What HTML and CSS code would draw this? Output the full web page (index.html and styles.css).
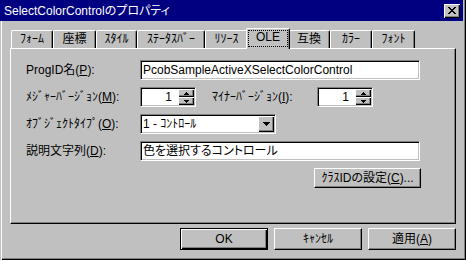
FILE: index.html
```html
<!DOCTYPE html>
<html lang="ja">
<head>
    <meta charset="UTF-8">
    <title>SelectColorControlのプロパティ</title>
    <link rel="stylesheet" href="styles.css">
</head>
<body>

<div class="window">
    <div class="titlebar">
        <span class="title">SelectColorControlのプロパティ</span>
        <span class="close">
            <svg width="8" height="7" viewBox="0 0 8 7"><path d="M0 0h2v1h-2z M6 0h2v1h-2z M1 1h2v1h-2z M5 1h2v1h-2z M2 2h4v1h-4z M3 3h2v1h-2z M2 4h4v1h-4z M1 5h2v1h-2z M5 5h2v1h-2z M0 6h2v1h-2z M6 6h2v1h-2z" fill="#000"/></svg>
        </span>
    </div>

    <div class="tabs">
        <div class="tab">ﾌｫｰﾑ</div>
        <div class="tab">座標</div>
        <div class="tab">ｽﾀｲﾙ</div>
        <div class="tab">ｽﾃｰﾀｽﾊﾞｰ</div>
        <div class="tab">ﾘｿｰｽ</div>
        <div class="tab active"><span class="focus">OLE</span></div>
        <div class="tab">互換</div>
        <div class="tab">ｶﾗｰ</div>
        <div class="tab">ﾌｫﾝﾄ</div>
    </div>

    <div class="panel">
        <div class="row">
            <label class="label">ProgID名(<u>P</u>):</label>
            <div class="field edit">PcobSampleActiveXSelectColorControl</div>
        </div>
        <div class="row">
            <label class="label">ﾒｼﾞｬｰﾊﾞｰｼﾞｮﾝ(<u>M</u>):</label>
            <div class="field spin">
                <span class="value">1</span>
                <span class="updown">
                    <span class="arrow-btn"><svg width="5" height="3" viewBox="0 0 5 3"><path d="M2 0h1v1h1v1h1v1h-5v-1h1v-1h1z" fill="#000"/></svg></span>
                    <span class="arrow-btn"><svg width="5" height="3" viewBox="0 0 5 3"><path d="M0 0h5v1h-1v1h-1v1h-1v-1h-1v-1h-1z" fill="#000"/></svg></span>
                </span>
            </div>
            <label class="label minor">ﾏｲﾅｰﾊﾞｰｼﾞｮﾝ(<u>I</u>):</label>
            <div class="field spin">
                <span class="value">1</span>
                <span class="updown">
                    <span class="arrow-btn"><svg width="5" height="3" viewBox="0 0 5 3"><path d="M2 0h1v1h1v1h1v1h-5v-1h1v-1h1z" fill="#000"/></svg></span>
                    <span class="arrow-btn"><svg width="5" height="3" viewBox="0 0 5 3"><path d="M0 0h5v1h-1v1h-1v1h-1v-1h-1v-1h-1z" fill="#000"/></svg></span>
                </span>
            </div>
        </div>
        <div class="row">
            <label class="label">ｵﾌﾞｼﾞｪｸﾄﾀｲﾌﾟ(<u>O</u>):</label>
            <div class="field combo">
                <span class="value">1 - ｺﾝﾄﾛｰﾙ</span>
                <span class="drop"><svg width="7" height="4" viewBox="0 0 7 4"><path d="M0 0h7v1h-1v1h-1v1h-1v1h-1v-1h-1v-1h-1v-1h-1z" fill="#000"/></svg></span>
            </div>
        </div>
        <div class="row">
            <label class="label">説明文字列(<u>D</u>):</label>
            <div class="field edit">色を選択するコントロール</div>
        </div>
        <div class="row end">
            <button class="btn classid">ｸﾗｽIDの設定(<u>C</u>)...</button>
        </div>
    </div>

    <div class="actions">
        <button class="btn default">OK</button>
        <button class="btn">ｷｬﾝｾﾙ</button>
        <button class="btn">適用(<u>A</u>)</button>
    </div>
</div>

</body>
</html>
```

FILE: styles.css
```css
body {
    margin: 0;
    padding: 0;
    background-color: #c0c0c0;
    font-family: "Liberation Sans", "Noto Sans CJK JP", sans-serif;
    font-size: 12px;
    line-height: 14px;
    font-feature-settings: "palt";
    color: #000;
}
.window {
    width: 466px;
    height: 260px;
    box-sizing: border-box;
    background-color: #c0c0c0;
    box-shadow: inset 1px 0 #c0c0c0, inset 2px 0 #fff,
                inset -1px -1px #000, inset -2px -2px #808080;
    overflow: hidden;
}
.titlebar {
    width: 463px;
    height: 21px;
    background-color: #000080;
    color: #fff;
    display: flex;
    align-items: center;
    justify-content: space-between;
    padding: 0 3px 0 4px;
    box-sizing: border-box;
}
.close {
    width: 16px;
    height: 14px;
    box-sizing: border-box;
    background-color: #c0c0c0;
    box-shadow: inset 1px 1px #fff, inset -1px -1px #000, inset -2px -2px #808080;
    display: flex;
    align-items: center;
    justify-content: center;
    padding-right: 1px;
}
.tabs {
    display: flex;
    align-items: flex-end;
    height: 20px;
    margin: 7px 0 0 11px;
    position: relative;
    z-index: 1;
}
.tab {
    height: 18px;
    box-sizing: border-box;
    padding-top: 1px;
    text-align: center;
    border-top: 1px solid #fff;
    border-left: 1px solid #fff;
    border-right: 1px solid #000;
    border-radius: 2px 2px 0 0;
    box-shadow: inset -1px 0 #808080;
    background-color: #c0c0c0;
    white-space: nowrap;
}
.tab:nth-child(1) { width: 42px; }
.tab:nth-child(2) { width: 43px; }
.tab:nth-child(3) { width: 41px; }
.tab:nth-child(4) { width: 68px; }
.tab:nth-child(5) { width: 43px; }
.tab:nth-child(7) { width: 42px; }
.tab:nth-child(8) { width: 42px; }
.tab:nth-child(9) { width: 43px; }
.tab.active {
    width: 44px;
    height: 21px;
    margin: 0 -2px -1px -2px;
    padding: 1px 1px 0 1px;
    position: relative;
    z-index: 2;
}
.focus {
    display: block;
    height: 15px;
    border: 1px dotted #000;
    line-height: 13px;
}
.panel {
    width: 446px;
    height: 176px;
    margin-left: 10px;
    box-sizing: border-box;
    border-top: 1px solid #fff;
    border-left: 1px solid #fff;
    border-right: 1px solid #000;
    border-bottom: 1px solid #000;
    box-shadow: inset -1px -1px #808080;
    padding: 11px 34px 0 15px;
    display: flex;
    flex-direction: column;
    gap: 7px;
}
.row {
    display: flex;
    align-items: center;
    height: 20px;
}
.row.end {
    justify-content: flex-end;
}
.label {
    width: 114px;
    white-space: nowrap;
}
.label.minor {
    width: 105px;
    margin-left: 16px;
}
.field {
    height: 20px;
    box-sizing: border-box;
    background-color: #fff;
    border: 1px solid;
    border-color: #808080 #fff #fff #808080;
    box-shadow: inset 1px 1px #000, inset -1px -1px #c0c0c0;
    padding: 2px 2px 0 2px;
    white-space: nowrap;
}
.edit {
    width: 280px;
}
.spin {
    width: 56px;
    display: flex;
    padding: 1px;
}
.spin .value {
    flex: 1;
    text-align: right;
    padding: 1px 6px 0 0;
}
.updown {
    width: 16px;
    display: flex;
    flex-direction: column;
}
.arrow-btn {
    flex: 1;
    background-color: #c0c0c0;
    box-shadow: inset 1px 1px #fff, inset -1px -1px #000, inset -2px -2px #808080;
    display: flex;
    align-items: center;
    justify-content: center;
}
.combo {
    width: 136px;
    display: flex;
    padding: 1px;
}
.combo .value {
    flex: 1;
    padding: 1px 0 0 1px;
}
.drop {
    width: 16px;
    background-color: #c0c0c0;
    box-shadow: inset 1px 1px #fff, inset -1px -1px #000, inset -2px -2px #808080;
    display: flex;
    align-items: center;
    justify-content: center;
}
.btn {
    font: inherit;
    color: #000;
    background-color: #c0c0c0;
    border: 1px solid;
    border-color: #fff #000 #000 #fff;
    box-shadow: inset -1px -1px #808080;
    padding: 0;
    margin: 0;
    height: 22px;
    width: 88px;
}
.btn.classid {
    width: 107px;
    height: 20px;
}
.btn.default {
    border: 1px solid #000;
    box-shadow: inset 1px 1px #fff, inset -1px -1px #000, inset -2px -2px #808080;
}
.actions {
    display: flex;
    justify-content: flex-end;
    gap: 6px;
    margin-top: 4px;
    padding-right: 10px;
}
```
